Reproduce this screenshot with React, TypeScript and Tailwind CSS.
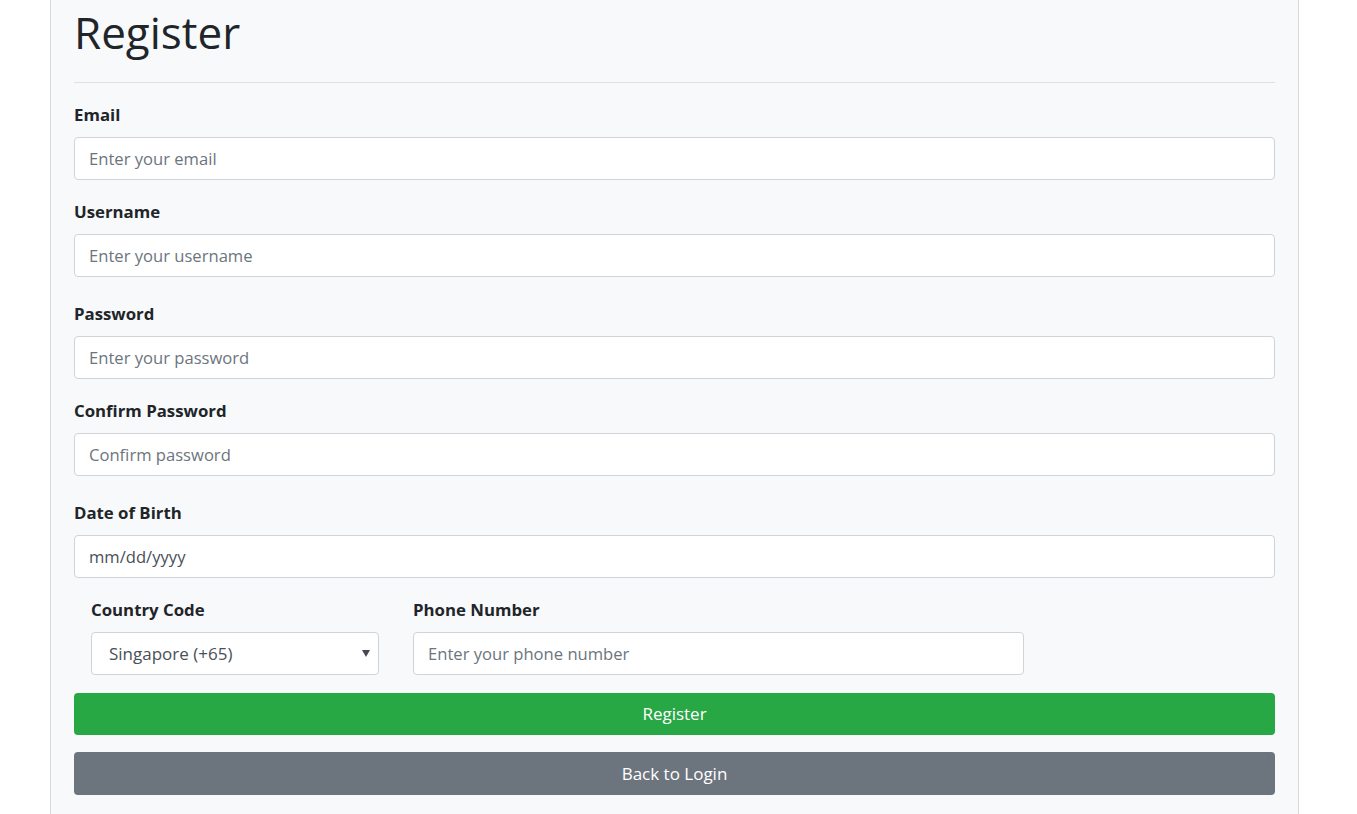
import { useState } from "react";

const labelCls = "block h-5 text-[16.8px] font-bold leading-5 text-[#212529]";
const inputCls =
  "block h-[43px] w-full rounded-[4px] border border-[#ced4da] bg-white px-[14px] text-[16.6px] text-[#495057] outline-none placeholder:text-[#6c757d]";

function Field({
  label,
  placeholder,
  type = "text",
  className = "",
}: {
  label: string;
  placeholder: string;
  type?: string;
  className?: string;
}) {
  const [value, setValue] = useState("");
  return (
    <div className={className}>
      <label className={labelCls}>{label}</label>
      <input
        type={type}
        value={value}
        onChange={(e) => setValue(e.target.value)}
        placeholder={placeholder}
        className={`mt-3 ${inputCls}`}
      />
    </div>
  );
}

export default function App() {
  const [code, setCode] = useState("+65");
  const [phone, setPhone] = useState("");

  return (
    <div
      className="min-h-screen bg-white"
      style={{ fontFamily: '"Open Sans", "Noto Sans", Arial, sans-serif' }}
    >
      <div className="ml-[50px] min-h-screen w-[1249px] border-x border-[#d9dadb] bg-[#f8f9fa] px-[23px] pb-4">
        <h1 className="pt-[5px] text-[44px] font-medium leading-[54px] text-[#212529]">
          Register
        </h1>
        <hr className="mt-[23px] border-t border-[#dfe0e1]" />

        <form className="mt-[22px]" onSubmit={(e) => e.preventDefault()}>
          <Field label="Email" placeholder="Enter your email" type="email" />
          <Field label="Username" placeholder="Enter your username" className="mt-[22px]" />
          <Field
            label="Password"
            placeholder="Enter your password"
            type="password"
            className="mt-[27px]"
          />
          <Field
            label="Confirm Password"
            placeholder="Confirm password"
            type="password"
            className="mt-[22px]"
          />
          <Field
            label="Date of Birth"
            placeholder="mm/dd/yyyy"
            className="mt-[27px] [&_input]:placeholder:text-[#495057]"
          />

          <div className="mt-[22px] flex gap-[34px] pl-[17px]">
            <div className="w-[288px]">
              <label className={labelCls}>Country Code</label>
              <div className="relative mt-3">
                <select
                  value={code}
                  onChange={(e) => setCode(e.target.value)}
                  className="block h-[43px] w-full appearance-none rounded-[4px] border border-[#ced4da] bg-white pl-[17px] pr-8 text-[17px] text-[#495057] outline-none"
                >
                  <option value="+65">Singapore (+65)</option>
                  <option value="+60">Malaysia (+60)</option>
                  <option value="+62">Indonesia (+62)</option>
                  <option value="+1">United States (+1)</option>
                </select>
                <span className="pointer-events-none absolute right-[9px] top-[18px] h-0 w-0 border-x-[4px] border-t-[7px] border-x-transparent border-t-[#444a50]" />
              </div>
            </div>
            <div className="w-[611px]">
              <label className={labelCls}>Phone Number</label>
              <input
                type="tel"
                value={phone}
                onChange={(e) => setPhone(e.target.value)}
                placeholder="Enter your phone number"
                className={`mt-3 ${inputCls}`}
              />
            </div>
          </div>

          <button
            type="submit"
            className="mt-[18px] block h-[42px] w-full rounded-[4px] bg-[#28a745] text-[17px] text-white"
          >
            Register
          </button>
          <button
            type="button"
            className="mt-[17px] block h-[43px] w-full rounded-[4px] bg-[#6c757d] text-[17px] text-white"
          >
            Back to Login
          </button>
        </form>
      </div>
    </div>
  );
}
